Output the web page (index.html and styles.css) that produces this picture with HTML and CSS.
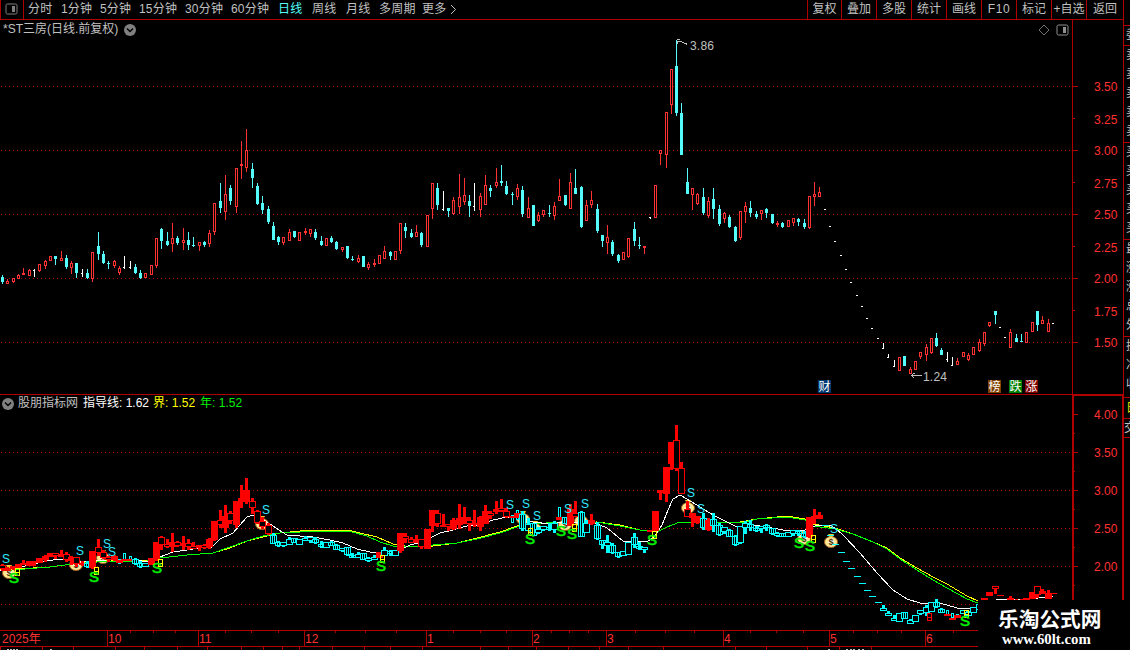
FILE: index.html
```
<!DOCTYPE html>
<html lang="zh-CN">
<head>
    <meta charset="UTF-8">
    <title>*ST三房 日线</title>
    <link rel="stylesheet" href="styles.css">
</head>
<body>
    <div class="terminal">
        <header class="toolbar">
            <div class="layout-btn">
                <svg width="13" height="12" viewBox="0 0 13 12"><rect x="1" y="1" width="11" height="10" rx="1.5" fill="none" stroke="#808080"/><rect x="7" y="3" width="3" height="6" fill="#808080"/></svg>
            </div>
            <nav class="periods">
                <span>分时</span>
                <span>1分钟</span>
                <span>5分钟</span>
                <span>15分钟</span>
                <span>30分钟</span>
                <span>60分钟</span>
                <span class="active">日线</span>
                <span>周线</span>
                <span>月线</span>
                <span>多周期</span>
                <span>更多</span>
                <svg width="7" height="11" viewBox="0 0 7 11"><path d="M1 1L5.5 5.5L1 10" fill="none" stroke="#c0c0c0"/></svg>
            </nav>
            <nav class="tools">
                <span>复权</span>
                <span>叠加</span>
                <span>多股</span>
                <span>统计</span>
                <span>画线</span>
                <span class="latin">F10</span>
                <span>标记</span>
                <span>+自选</span>
                <span>返回</span>
            </nav>
        </header>

        <section class="panel price">
            <svg id="price" width="1123" height="374" viewBox="0 20 1123 374"></svg>
            <div class="title">
                <span>*ST三房(日线.前复权)</span>
                <svg class="drop" width="12" height="12" viewBox="0 0 12 12"><circle cx="6" cy="6" r="6" fill="#808080"/><path d="M3 4.5L6 7.5L9 4.5" fill="none" stroke="#000" stroke-width="1.5"/></svg>
            </div>
            <div class="corner">
                <svg width="12" height="12" viewBox="0 0 12 12"><path d="M6 1L11 6L6 11L1 6Z" fill="none" stroke="#707070"/></svg>
                <svg width="13" height="12" viewBox="0 0 13 12"><rect x="1" y="1" width="11" height="10" rx="1.5" fill="none" stroke="#909090"/><rect x="7" y="3" width="3" height="6" fill="#909090"/></svg>
            </div>
        </section>

        <section class="panel indicator">
            <svg id="indicator" width="1123" height="235" viewBox="0 395 1123 235"></svg>
            <div class="title legend">
                <svg class="drop" width="12" height="12" viewBox="0 0 12 12"><circle cx="6" cy="6" r="6" fill="#808080"/><path d="M3 4.5L6 7.5L9 4.5" fill="none" stroke="#000" stroke-width="1.5"/></svg>
                <span class="name">股朋指标网</span>
                <span class="guide">指导线: 1.62</span>
                <span class="bound">界: 1.52</span>
                <span class="year">年: 1.52</span>
            </div>
        </section>

        <footer>
            <svg id="timeline" width="1123" height="20" viewBox="0 630 1123 20"></svg>
        </footer>
    </div>

    <aside class="quote">
        <div class="code"></div>
        <div class="ratio">委</div>
        <div class="rows">卖<br>卖<br>卖<br>卖<br>卖</div>
        <div class="rows">买<br>买<br>买<br>买<br>买</div>
        <div class="rows">最<br>涨<br>涨<br>总<br>外</div>
        <div class="rows short">换<br>净<br>收</div>
        <div class="tab">日</div>
        <div class="deal">交</div>
    </aside>

    <div class="watermark">
        <div class="site">乐淘公式网</div>
        <div class="url">www.60lt.com</div>
    </div>

    <script src="chart.js"></script>
</body>
</html>
```
FILE: styles.css
```
* {
    margin: 0;
    padding: 0;
    box-sizing: border-box;
}

body {
    display: flex;
    width: 1130px;
    height: 650px;
    overflow: hidden;
    position: relative;
    background: #000;
    color: #c0c0c0;
    font-family: "Liberation Sans", "Noto Sans CJK SC", sans-serif;
    font-size: 12px;
}

svg {
    display: block;
}

.terminal {
    width: 1123px;
    display: flex;
    flex-direction: column;
}

/* top bar */
.toolbar {
    display: flex;
    height: 20px;
    line-height: 19px;
    border-bottom: 1px solid #b00000;
    white-space: nowrap;
}

.layout-btn {
    width: 24px;
    padding: 3px 0 0 4px;
    border-left: 1px solid #b00000;
    border-right: 1px solid #b00000;
}

.periods {
    display: grid;
    grid-template-columns: 33px 39px 39px 46px 46px 47px 34px 34px 33px 43px 28px 10px;
    align-items: center;
    padding-left: 4px;
    letter-spacing: 0.2px;
}

.periods .active {
    color: #54fcfc;
}

.tools {
    display: flex;
    margin-left: auto;
}

.tools span {
    width: 35px;
    border-left: 1px solid #b00000;
    text-align: center;
}

.tools span:first-child {
    width: 34px;
}

.tools span:last-child {
    width: 37px;
}

.tools .latin {
    letter-spacing: 0.6px;
}

/* charts */
.panel {
    position: relative;
}

.indicator {
    border-top: 1px solid #b00000;
}

.title {
    position: absolute;
    top: 0;
    left: 3px;
    height: 19px;
    line-height: 19px;
    display: flex;
    align-items: center;
    gap: 6px;
    white-space: nowrap;
}

.legend {
    left: 2px;
    top: -1px;
    gap: 4px;
}

.legend .guide {
    color: #fff;
    margin-left: 1px;
}

.legend .bound {
    color: #ffff00;
}

.legend .year {
    color: #00f000;
    margin-left: 1px;
}

.corner {
    position: absolute;
    top: 4px;
    right: 54px;
    display: flex;
    gap: 6px;
}

.shape {
    shape-rendering: crispEdges;
}

.scale {
    fill: #ff3030;
    font-size: 12px;
}

.note {
    fill: #c0c0c0;
    font-size: 12px;
    letter-spacing: 0.2px;
}

.badge {
    fill: #fff;
    font-size: 12px;
}

.sell {
    fill: #30e8ff;
    font-size: 12px;
}

.buy {
    fill: #00f000;
    stroke: #00f000;
    stroke-width: 0.6px;
    font-size: 15px;
}

.dollar {
    fill: #503000;
    font-size: 9px;
    font-weight: bold;
}

/* quote strip on the right edge */
.quote {
    width: 7px;
    height: 600px;
    overflow: hidden;
    border-left: 1px solid #b00000;
}

.quote div {
    border-bottom: 1px solid #b00000;
    padding-left: 2px;
    width: 40px;
}

.quote .code {
    height: 26px;
}

.quote .ratio {
    height: 20px;
    line-height: 19px;
}

.quote .rows {
    height: 97px;
    line-height: 19px;
}

.quote .short {
    height: 61px;
}

.quote .tab {
    height: 21px;
    line-height: 20px;
    color: #e0e000;
}

.quote .deal {
    height: 19px;
    line-height: 18px;
    padding-left: 0;
}

.watermark {
    position: absolute;
    left: 978px;
    top: 600px;
    width: 152px;
    height: 50px;
    background: #000;
    color: #fff;
    font-weight: bold;
    white-space: nowrap;
}

.site {
    padding-left: 20px;
    font-family: "Noto Sans CJK SC", sans-serif;
    font-size: 20.7px;
    line-height: 37px;
    height: 31px;
}

.url {
    padding-left: 24px;
    font-family: "Liberation Serif", serif;
    font-size: 14.8px;
    line-height: 16px;
}
```
FILE: chart.js
```
const NS = 'http://www.w3.org/2000/svg';
const RED = '#b00000';

// x, high, body top, body bottom, low, type (r up, c down, w flat with the y of its tick in body top)
const bars = `
2 275 277 282 284 c|7 279 281 284 284 r|13 278 278 282 283 r|18 274 275 279 279 r|23 268 273 275 275 r
29 269 270 276 276 r|34 269 270 271 277 w|39 264 264 271 272 r|45 260 261 266 269 r|50 256 256 261 261 r
55 256 256 259 265 c|61 251 258 261 261 r|66 255 258 267 269 c|71 261 263 268 274 r|76 263 263 273 278 c
82 269 273 274 277 w|87 269 273 278 279 c|92 252 252 279 282 r|98 232 246 254 260 c|103 251 254 263 264 c
108 261 263 264 269 c|114 260 261 266 268 r|119 266 268 273 275 r|124 256 267 268 269 w|130 261 267 268 269 w
135 264 267 273 274 c|140 270 273 278 279 c|145 273 273 278 278 r|151 265 265 275 275 r|156 238 238 266 268 r
161 228 229 241 249 c|167 232 241 245 246 c|172 223 238 244 252 r|177 236 238 243 245 c|183 228 240 243 250 r
188 232 240 245 250 c|193 237 245 246 247 c|199 242 242 246 251 r|204 241 242 245 247 c|209 230 233 244 247 r
214 203 203 232 235 r|220 183 201 208 213 c|225 175 194 212 220 r|230 185 188 201 205 c|236 168 168 207 213 r
241 141 164 166 179 r|246 129 150 168 172 r|252 163 169 178 188 c|257 183 186 204 205 c|262 196 203 210 214 c
268 206 209 222 224 c|273 222 226 240 240 c|278 236 237 242 245 c|283 237 237 243 245 r|289 229 232 241 241 r
294 231 231 237 238 c|299 232 232 241 241 r|305 228 231 233 235 r|310 229 229 234 237 r|315 229 232 238 240 c
321 236 241 245 246 c|326 238 238 246 246 r|331 236 238 242 243 c|336 241 242 249 250 c|342 247 247 250 252 r
347 246 246 258 259 c|352 256 259 260 261 c|358 255 258 262 263 r|363 256 256 267 267 c|368 262 264 268 270 r
374 259 263 265 267 r|379 255 255 264 264 r|384 246 251 259 259 r|390 251 252 256 260 c|395 251 251 260 260 r
400 223 223 251 254 r|405 223 227 231 238 c|411 229 233 237 238 c|416 225 232 237 237 r|421 232 233 245 247 c
427 215 215 247 247 r|432 183 183 209 219 r|437 183 188 205 210 c|443 191 209 210 211 w|448 208 208 211 217 c
453 197 200 214 215 r|459 174 197 207 214 r|464 178 195 202 205 r|469 195 201 206 217 c|474 183 206 207 211 w
480 193 196 210 217 r|485 175 185 205 205 r|490 185 188 191 197 c|496 168 182 186 188 r|501 165 181 183 186 c
506 181 186 194 195 c|512 192 194 195 205 c|517 184 188 197 200 r|522 186 190 214 217 c|528 197 208 218 218 r
533 205 205 226 226 c|538 212 215 221 222 r|543 210 210 215 217 r|549 205 213 214 217 c|554 202 206 216 220 r
559 179 196 201 201 r|565 195 195 205 206 c|570 173 182 209 209 r|575 169 188 194 194 c|581 186 187 227 228 c
586 200 205 221 221 r|591 191 200 205 208 r|597 204 209 231 233 c|602 235 235 241 247 c|607 225 237 243 254 r
612 240 242 254 256 c|618 254 255 261 263 c|623 252 252 260 260 r|628 238 238 257 258 r|634 222 229 241 246 c
639 237 245 246 249 c|644 246 246 248 254 r|650 217 217 218 219 w|655 185 185 218 218 r|660 150 150 154 165 r
666 112 112 155 168 r|671 69 69 105 114 r|676 40 66 113 116 c|681 103 113 155 155 c|687 168 182 194 194 c
692 188 188 195 210 r|697 193 194 204 205 r|703 188 197 213 215 c|708 197 201 216 218 r|713 188 199 209 219 c
719 205 209 224 226 c|724 212 213 219 223 r|729 215 217 227 228 c|735 226 227 241 242 c|740 211 211 238 240 r
745 202 206 212 223 r|750 201 208 213 217 c|756 211 214 217 219 c|761 210 210 214 220 r|766 208 209 213 218 c
772 214 214 223 224 c|777 221 223 225 227 r|782 222 223 227 228 c|788 220 220 227 227 r|793 218 218 223 226 r
798 218 219 222 226 c|804 219 223 227 229 c|809 196 196 228 229 r|814 182 194 197 206 r|819 187 192 197 197 r
825 209 209 210 210 w|830 226 226 227 227 w|835 241 241 242 242 w|841 255 255 256 256 w|846 269 269 270 270 w
851 282 282 283 283 w|857 295 295 296 296 w|862 306 306 307 307 w|867 318 318 319 319 w|872 328 328 329 329 w
878 338 338 339 339 w|883 343 348 349 349 w|888 354 357 358 358 w|894 360 366 367 367 w|899 357 357 371 371 r
904 356 356 366 366 c|910 367 369 374 374 r|915 361 361 370 370 r|920 352 352 357 359 r|926 344 347 355 361 r
931 338 338 353 354 r|936 333 338 346 347 c|941 348 350 355 355 c|947 352 359 360 362 w|952 357 365 366 366 w
957 358 361 365 365 r|963 352 352 357 357 r|968 353 355 360 361 r|973 347 347 355 355 r|979 339 342 351 352 r
984 332 332 344 346 r|989 322 322 326 327 r|995 311 311 315 324 c|1000 327 327 328 328 w|1005 337 337 338 338 w
1010 329 332 348 348 r|1016 334 338 342 342 c|1021 334 341 342 342 c|1026 332 332 343 343 r|1032 322 322 332 332 r
1037 311 311 325 331 c|1042 316 320 324 324 r|1048 319 323 332 332 r|1053 323 323 324 324 w
`.trim().split(/[|\n]/).map(s => s.split(' ')).map(p => ({
    x: +p[0], hi: +p[1], top: +p[2], bot: +p[3], lo: +p[4], type: p[5]
}));

// x ranges where the indicator paints its candles red
const strong = [[0, 82], [92, 114], [151, 268], [400, 506], [570, 575], [591, 591], [650, 697], [708, 708], [809, 819], [984, 1060]];
// red body under a cyan wick
const mixed = [119, 124, 130, 379, 512, 517, 559, 947, 952, 957];

function add(parent, tag, attrs, text) {
    const el = document.createElementNS(NS, tag);
    for (const k in attrs) el.setAttribute(k, attrs[k]);
    if (text) el.textContent = text;
    parent.appendChild(el);
    return el;
}

function rect(g, x, y, w, h, fill) {
    add(g, 'rect', { x, y, width: w, height: h, fill });
}

function box(g, x, y, w, h, color) {
    if (h < 3) return rect(g, x, y, w, h, color);
    add(g, 'rect', { x: x + 0.5, y: y + 0.5, width: w - 1, height: h - 1, fill: '#000', stroke: color });
}

function group(svg) {
    return add(svg, 'g', { class: 'shape' });
}

function gridLine(g, y) {
    add(g, 'line', { x1: 1, x2: 1072, y1: y + 0.5, y2: y + 0.5, stroke: RED, 'stroke-dasharray': '1 3' });
}

function drawPrice() {
    const svg = document.getElementById('price');
    const g = group(svg);
    [86, 150, 214, 278, 342].forEach(y => gridLine(g, y));
    rect(g, 1072, 20, 1, 374, RED);

    for (let i = 0; i < 9; i++) {
        const y = 86 + i * 32;
        rect(g, 1073, y, i % 2 ? 2 : 5, 1, RED);
        add(svg, 'text', { x: 1094, y: y + (i % 2 ? 6 : 5), class: 'scale' }, (3.5 - i * 0.25).toFixed(2));
    }

    bars.forEach(b => {
        if (b.type === 'w') {
            const flat = b.lo - b.hi <= 1;
            rect(g, b.x - 1, b.top, flat ? 2 : 1, 1, '#fff');
            if (!flat) rect(g, b.x, b.hi, 1, b.lo - b.hi, '#fff');
            return;
        }
        const color = b.type === 'r' ? '#ff3232' : '#54fcfc';
        rect(g, b.x, b.hi, 1, b.lo - b.hi, color);
        if (b.type === 'r') box(g, b.x - 1, b.top, 3, b.bot - b.top, color);
        else rect(g, b.x - 1, b.top, 3, b.bot - b.top, color);
    });

    add(g, 'path', { d: 'M677.5 41.5L682 42L687.5 44.5M677 39.5H680M677.5 41V44', fill: 'none', stroke: '#c0c0c0' });
    add(svg, 'text', { x: 690, y: 50, class: 'note' }, '3.86');
    add(g, 'path', { d: 'M911 375.5H922M914.5 373L911.5 375.5L914.5 378.5', fill: 'none', stroke: '#c0c0c0' });
    add(svg, 'text', { x: 923, y: 381, class: 'note' }, '1.24');

    [[818, '#003870', '财'], [988, '#804000', '榜'], [1009, '#008000', '跌'], [1025, '#800000', '涨']].forEach(([x, color, t]) => {
        rect(g, x, 380, 13, 13, color);
        add(svg, 'text', { x: x + 0.5, y: 391, class: 'badge' }, t);
    });
}

function bag(svg, x, y) {
    add(svg, 'ellipse', { cx: x, cy: y + 1, rx: 6.5, ry: 5.5, fill: '#ffe890', stroke: '#a06020' });
    add(svg, 'path', { d: `M${x - 3} ${y - 7}H${x + 3}L${x + 1.5} ${y - 4}H${x - 1.5}Z`, fill: '#f0c828' });
    add(svg, 'ellipse', { cx: x, cy: y + 1, rx: 3, ry: 3.5, fill: '#fff8d8' });
    add(svg, 'text', { x: x - 2.5, y: y + 4, class: 'dollar' }, '$');
}

function marker(g, x, y, color) {
    add(g, 'path', { d: `M${x - 1.5} ${y - 3.5}h4v7h-4zM${x - 1.5} ${y + 0.5}h4`, fill: 'none', stroke: color });
}

function polyline(g, points, color) {
    add(g, 'polyline', { points, fill: 'none', stroke: color });
}

function drawIndicator() {
    const svg = document.getElementById('indicator');
    const g0 = group(svg);
    const Y = y => Math.round(452 + (y - 86) * 0.59375);

    [452, 490, 528, 566, 604].forEach(y => gridLine(g0, y));
    rect(g0, 1072, 395, 2, 235, RED);
    rect(g0, 1072, 395, 51, 1, RED);
    rect(g0, 1122, 395, 1, 235, RED);
    for (let i = 0; i < 11; i++) {
        const y = 414 + i * 19;
        rect(g0, 1074, y, i % 2 ? 1 : 4, 1, RED);
        if (i % 2 === 0 && i < 9) add(svg, 'text', { x: 1094, y: y + 5, class: 'scale' }, (4 - i * 0.25).toFixed(2));
    }

    [[9, 572], [76, 564], [103, 557], [262, 523], [523, 518], [535, 528], [565, 524], [581, 520], [688, 507], [804, 538], [831, 541]]
        .forEach(p => bag(svg, p[0], p[1]));

    const lines = group(svg);
    polyline(lines, '0,570 50,567 72,564 110,560 147,561 160,558 187,555 213,553 230,548 247,541 263,537 280,533 300,531 330,530 352,531 360,533 377,537 393,544 405,546 433,546 457,543 477,538 500,532 517,526 547,523 597,522 620,525 640,530 657,532 667,527 680,522 740,522 757,519 787,516 805,519 813,524 835,528 853,534 873,542 887,548 900,558 917,568 933,577 947,584 967,596 978,601', '#ffff00');
    polyline(lines, '0,571 50,567 72,564 110,561 147,561 160,558 187,555 213,553 230,547 247,541 263,536 280,533 300,532 330,531 352,532 367,536 380,542 393,546 413,547 433,545 457,543 477,539 500,533 517,527 533,524 560,522 597,522 620,526 640,530 657,532 667,527 680,522 707,522 740,523 757,519 787,517 805,520 813,526 835,529 853,534 873,542 887,549 900,559 917,570 933,580 947,588 967,599 978,603', '#00ff00');
    polyline(lines, '0,571 17,568 33,564 47,561 60,559 72,560 83,562 117,559 133,559 147,562 160,557 173,552 187,550 200,548 212,547 220,539 233,533 240,525 247,517 253,515 262,519 273,526 282,532 287,535 300,536 313,537 330,540 343,543 357,549 370,552 383,553 397,551 410,545 423,542 432,537 440,533 453,530 467,526 480,525 493,520 507,517 520,517 533,522 550,524 557,523 593,522 607,528 623,541 647,542 655,536 662,525 668,510 673,499 680,495 687,499 700,507 713,515 727,522 737,527 753,525 767,527 783,530 803,531 817,525 830,525 835,528 843,535 860,553 877,573 893,590 907,599 920,603 940,603 957,608 978,608 998,599 1030,599 1053,596', '#fff');

    const g = group(svg);
    bars.forEach(b => {
        const hi = Y(b.hi), top = Y(b.top);
        const bot = Math.max(Y(b.bot), top + 1), lo = Math.max(Y(b.lo), hi + 1);
        const red = strong.some(r => b.x >= r[0] && b.x <= r[1]);
        const color = red ? '#ff0000' : '#00ffff';
        const down = b.type === 'c';

        if (b.type === 'w' && b.lo - b.hi <= 1) {
            rect(g, b.x - 3, top, 7, 1, color);
        } else if (mixed.includes(b.x)) {
            box(g, b.x - 1, hi, 3, lo - hi, '#00ffff');
            rect(g, b.x - 3, top, 7, Math.max(2, bot - top), '#ff0000');
        } else if (red && !down) {
            rect(g, b.x - 1, hi, 3, lo - hi + 1, color);
            rect(g, b.x - 3, top, 7, Math.max(2, bot - top + 1), color);
        } else {
            rect(g, b.x - 1, hi, 3, lo - hi + 1, color);
            box(g, b.x - 3, top, 7, Math.max(3, bot - top + 1), color);
            if (!red && down) box(g, b.x - 1, top, 3, bot - top + 1, color);
        }
    });

    [[17, 572], [96, 571], [160, 563], [382, 559], [530, 532], [574, 528], [654, 535], [813, 539], [966, 614]]
        .forEach(p => marker(g, p[0], p[1], '#ffff00'));
    marker(g, 929, 617, '#ff0000');

    [[2, 563], [76, 555], [103, 548], [108, 556], [262, 514], [506, 509], [522, 508], [533, 520], [564, 513], [581, 508], [687, 497], [697, 513], [830, 533]]
        .forEach(p => add(svg, 'text', { x: p[0], y: p[1], class: 'sell' }, 'S'));
    [[9, 583], [89, 582], [152, 573], [376, 571], [525, 544], [556, 536], [567, 539], [647, 545], [794, 548], [805, 551], [960, 626]]
        .forEach(p => add(svg, 'text', { x: p[0], y: p[1], class: 'buy' }, 'S'));
}

function drawTimeline() {
    const svg = document.getElementById('timeline');
    const g = group(svg);
    rect(g, 0, 630, 1123, 1, RED);
    rect(g, 0, 646, 1123, 1, RED);
    add(svg, 'text', { x: 2, y: 643, class: 'scale' }, '2025年');
    [[107, 10], [198, 11], [304, 12], [426, 1], [532, 2], [606, 3], [723, 4], [829, 5], [925, 6]].forEach(([x, m]) => {
        rect(g, x, 630, 1, 16, RED);
        add(svg, 'text', { x: x + 1, y: 643, class: 'scale' }, String(m));
    });
    [130, 153, 175, 225, 251, 278, 335, 365, 396, 453, 480, 506, 551, 569, 588, 635, 665, 694, 750, 776, 803, 853, 877, 901, 953]
        .forEach(x => rect(g, x, 631, 1, 2, RED));
    [0, 42, 73, 115, 144, 177, 207, 241, 263, 282, 299, 332, 364, 390, 422, 480, 508, 536, 568, 599, 628, 663, 735, 766, 807, 839, 871]
        .forEach(x => rect(g, x, 647, 1, 3, RED));
    // tops of the indicator tabs that run under the window edge
    [7, 10, 13, 16, 50, 828, 846, 850, 853, 858, 862].forEach(x => rect(g, x, 649, 2, 1, '#c0c0c0'));
}

drawPrice();
drawIndicator();
drawTimeline();
```
